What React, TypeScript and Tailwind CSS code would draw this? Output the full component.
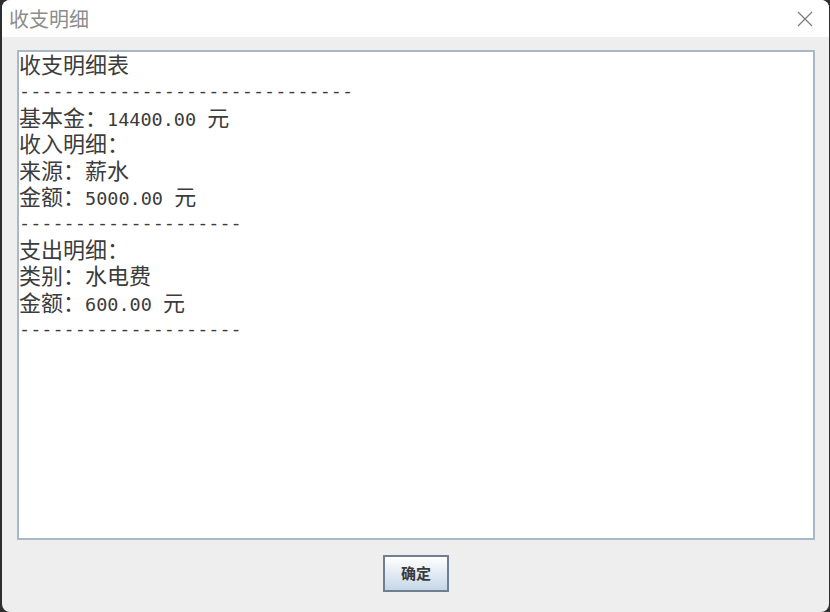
import React from "react";

const lines: string[] = [
  "收支明细表",
  "------------------------------",
  "基本金：14400.00 元",
  "收入明细：",
  "来源：薪水",
  "金额：5000.00 元",
  "--------------------",
  "支出明细：",
  "类别：水电费",
  "金额：600.00 元",
  "--------------------",
];

function Line({ text }: { text: string }) {
  const runs: { cjk: boolean; s: string }[] = [];
  for (const ch of text) {
    const cjk = ch.charCodeAt(0) > 0x2e80;
    const last = runs[runs.length - 1];
    if (last && last.cjk === cjk) last.s += ch;
    else runs.push({ cjk, s: ch });
  }
  return (
    <div className="h-[26.4px] leading-[26.4px] whitespace-pre">
      {runs.map((r, i) =>
        r.cjk ? (
          <span
            key={i}
            className="text-[22px] leading-[22px] align-baseline [font-family:'Noto_Sans_CJK_SC',sans-serif]"
          >
            {r.s}
          </span>
        ) : (
          <span
            key={i}
            className="text-[18.5px] leading-[18px] align-baseline [font-family:'DejaVu_Sans_Mono',monospace]"
          >
            {r.s}
          </span>
        )
      )}
    </div>
  );
}

export default function App() {
  return (
    <div className="w-[830px] h-[612px] bg-[#2e2e2e] pl-[2px] pr-[1px] overflow-hidden">
      <div className="w-full h-full rounded-[8px] overflow-hidden flex flex-col bg-[#eeeeee]">
        <div className="h-[37px] bg-white flex items-center justify-between pl-[7px] pr-[16px] shrink-0">
          <span className="text-[20px] text-[#8c8c8c] [font-family:'Noto_Sans_CJK_SC',sans-serif] leading-none">
            收支明细
          </span>
          <svg width="16" height="16" viewBox="0 0 16 16">
            <path d="M1 1 L15 15 M15 1 L1 15" stroke="#7a7a7a" strokeWidth="1.2" fill="none" />
          </svg>
        </div>
        <div className="flex-1 flex flex-col pl-[15px] pr-[14px] pt-[13px]">
          <div className="h-[490px] border-2 border-[#a9b8c6] bg-white text-[#3c3c3c]">
            {lines.map((l, i) => (
              <Line key={i} text={l} />
            ))}
          </div>
          <div className="flex justify-center pt-[15px]">
            <button className="w-[66px] h-[37px] border-2 border-[#6f7f8f] bg-gradient-to-b from-white to-[#c6d6e8] text-[15px] font-bold text-[#3a3a3a] [font-family:'Noto_Sans_CJK_SC',sans-serif]">
              确定
            </button>
          </div>
        </div>
      </div>
    </div>
  );
}
